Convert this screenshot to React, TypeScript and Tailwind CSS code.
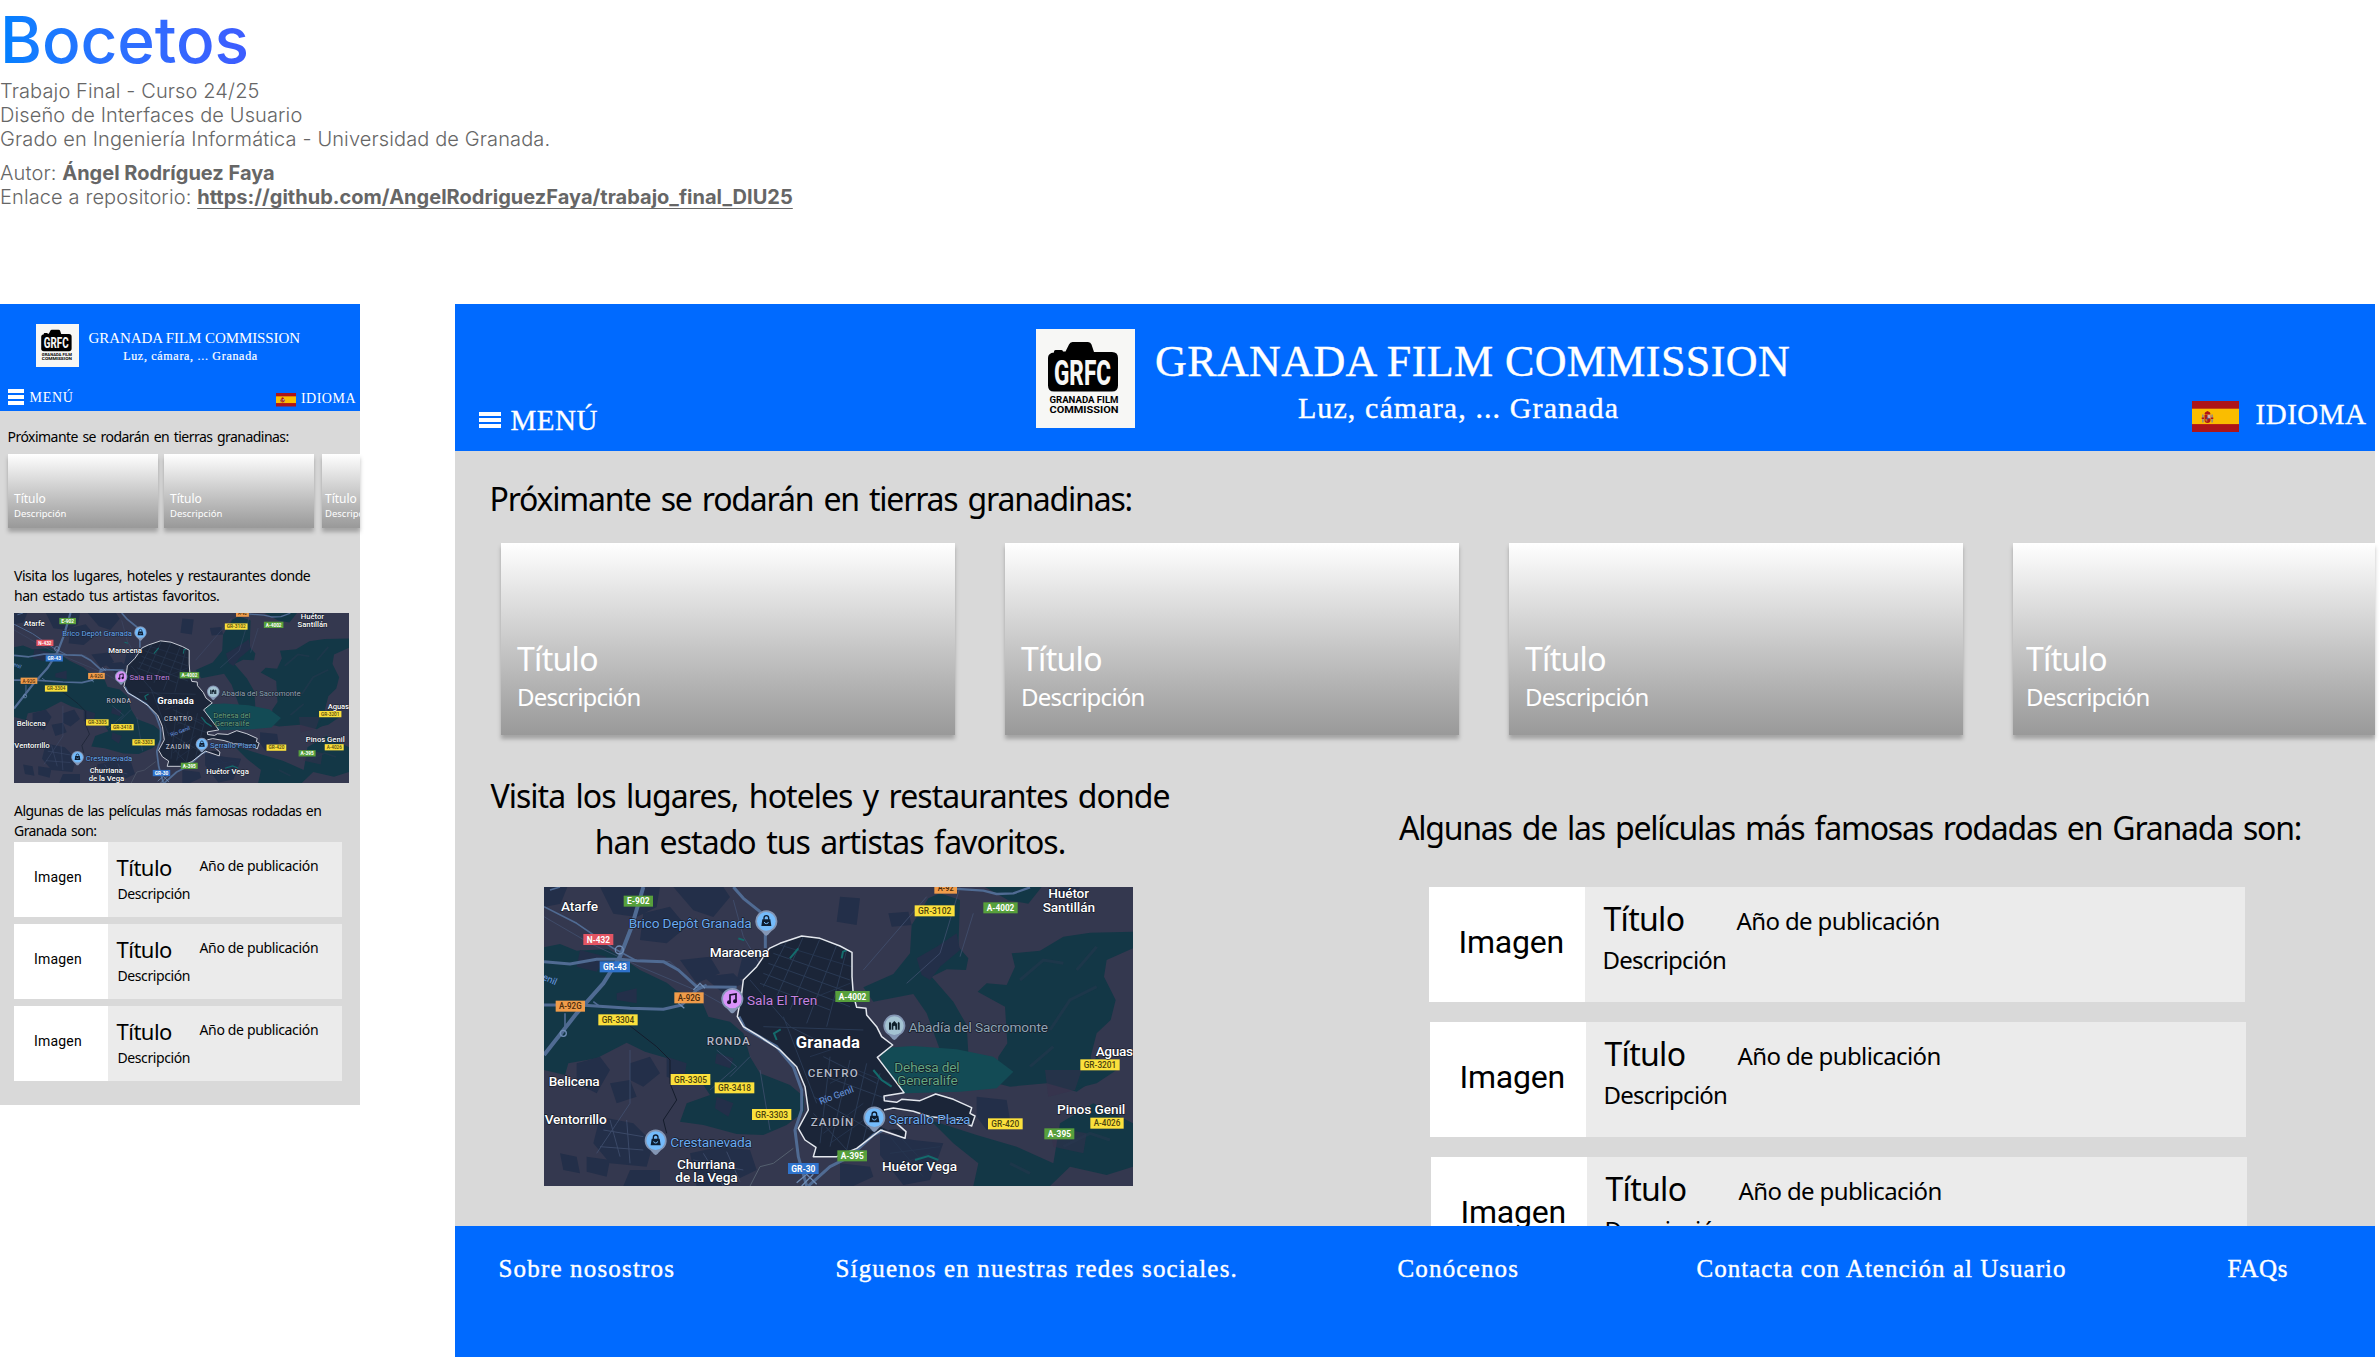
import type { ReactNode } from "react";

const serif = "font-['Liberation_Serif',serif] text-white whitespace-nowrap";
const sans = "font-['Noto_Sans',sans-serif]";

/* ---------- Logo ---------- */

function Logo({ className }: { className: string }) {
  return (
    <svg viewBox="0 0 99 99" className={className} role="img" aria-label="Granada Film Commission">
      <rect width="99" height="99" fill="#f7f7f5" />
      <path
        d="M18 23.5 V22.5 q0-1.5 1.5-1.5 h6 q1.5 0 1.5 1.5 h2.5 L33 15.500 q1-2.500 3.500-2.500 H52 q2.700 0 3.500 2.500 L58 23 H76 q6 0 6 6 V56.500 q0 6-6 6 H18 q-6 0-6-6 V29 q0-5 6-5.500 Z"
        fill="#000"
      />
      <g fontFamily="Roboto, sans-serif">
        <text x="18" y="55.500" fontSize="35" fontWeight="800" fill="#f7f7f5" textLength="57" lengthAdjust="spacingAndGlyphs">
          GRFC
        </text>
        <text x="13.500" y="73.500" fontSize="9.800" fontWeight="700" textLength="69" lengthAdjust="spacingAndGlyphs">
          GRANADA FILM
        </text>
        <text x="13.500" y="83.500" fontSize="9.800" fontWeight="700" textLength="69" lengthAdjust="spacingAndGlyphs">
          COMMISSION
        </text>
      </g>
    </svg>
  );
}

/* ---------- Spanish flag ---------- */

function Flag({ className }: { className: string }) {
  return (
    <svg viewBox="0 0 47 31" preserveAspectRatio="none" className={className} role="img" aria-label="España">
      <rect width="47" height="31" fill="#ad1519" />
      <rect y="7.700" width="47" height="15.400" fill="#fabd00" />
      <g>
        <rect x="10" y="13.500" width="1.700" height="8" fill="#9a8f78" />
        <rect x="19.300" y="13.500" width="1.700" height="8" fill="#9a8f78" />
        <path d="M9.700 16.500h2.300v1.500h-2.300zM19 16.500h2.300v1.500h-2.300z" fill="#ad1519" />
        <path d="M12.500 12.500 q0-1.500 3-2.500 q3 1 3 2.500 l-.600 1 h-4.800z" fill="#ad1519" />
        <path d="M12.500 13.800h6v5.200q0 3-3 3t-3-3z" fill="#ad1519" />
        <path d="M15.500 13.800h3v3.500h-3z" fill="#c9b3b6" />
        <path d="M13.300 18h2v2.800q-2-.300-2-1.800z" fill="#c8742a" />
        <circle cx="15.500" cy="17.500" r="1" fill="#3c5a8c" />
      </g>
    </svg>
  );
}

function Burger({ className = "" }: { className?: string }) {
  return (
    <div className={`flex h-4 flex-col justify-between ${className}`}>
      <div className="h-1 bg-white" />
      <div className="h-1 bg-white" />
      <div className="h-1 bg-white" />
    </div>
  );
}

/* ---------- Map ---------- */

type Shield = [string, number, number, number, "y" | "g" | "o" | "b" | "r"];

const shields: Shield[] = [
  ["E-902", 281, 77, 88, "g"],
  ["N-432", 160, 192, 90, "r"],
  ["GR-43", 209, 274, 91, "b"],
  ["A-92G", 77, 392, 88, "o"],
  ["A-92G", 433, 367, 88, "o"],
  ["GR-3304", 205, 433, 118, "y"],
  ["GR-3305", 422, 612, 119, "y"],
  ["GR-3418", 554, 637, 119, "y"],
  ["GR-3303", 666, 717, 118, "y"],
  ["GR-30", 774, 879, 92, "b"],
  ["A-92", 1213, 38, 68, "o"],
  ["GR-3102", 1154, 106, 120, "y"],
  ["A-4002", 1360, 97, 103, "g"],
  ["A-4002", 916, 363, 103, "g"],
  ["GR-3201", 1651, 568, 118, "y"],
  ["GR-420", 1374, 745, 104, "y"],
  ["A-4026", 1681, 743, 100, "y"],
  ["A-395", 1543, 775, 90, "g"],
  ["A-395", 922, 841, 89, "g"],
];

const shieldFill = { y: "#fbe03c", g: "#57a03c", o: "#f09c4a", b: "#2f73cc", r: "#e25563" };
const shieldText = { y: "#4c430f", g: "#fff", o: "#4a2a0c", b: "#fff", r: "#fff" };

type Label = [string, number, number, number, number, number, string];

const labels: Label[] = [
  ["Atarfe", 93, 122, 41, 111, 500, "#fff"],
  ["Maracena", 539, 262, 41, 178, 500, "#fff"],
  ["Belicena", 56, 648, 41, 153, 500, "#fff"],
  ["Ventorrillo", 44, 763, 41, 186, 500, "#fff"],
  ["Churriana", 441, 896, 41, 174, 500, "#fff"],
  ["de la Vega", 436, 936, 41, 187, 500, "#fff"],
  ["Huétor", 1555, 85, 41, 122, 500, "#fff"],
  ["Santillán", 1538, 125, 41, 157, 500, "#fff"],
  ["Aguas", 1697, 558, 41, 112, 500, "#fff"],
  ["Pinos Genil", 1581, 732, 41, 205, 500, "#fff"],
  ["Huétor Vega", 1056, 902, 41, 225, 500, "#fff"],
  ["Granada", 797, 533, 50, 193, 700, "#fff"],
  ["RONDA", 530, 525, 35, 129, 500, "#b4bac8"],
  ["CENTRO", 833, 622, 35, 150, 500, "#b4bac8"],
  ["ZAIDÍN", 842, 769, 35, 128, 500, "#b4bac8"],
  ["Brico Depôt Granada", 296, 173, 41, 369, 400, "#6aaaf0"],
  ["Crestanevada", 421, 831, 41, 245, 400, "#6aaaf0"],
  ["Serrallo Plaza", 1076, 762, 41, 245, 400, "#6aaaf0"],
  ["Sala El Tren", 651, 406, 41, 211, 400, "#c583e0"],
  ["Abadía del Sacromonte", 1136, 487, 41, 418, 400, "#8fa5b5"],
  ["Dehesa del", 1093, 606, 41, 196, 400, "#63a883"],
  ["Generalife", 1101, 646, 41, 182, 400, "#63a883"],
];

const bag = (
  <>
    <path d="M-12 -6h24l3 20h-30z" fill="#0d1c30" />
    <path d="M-7 -5v-5a7 7 0 0 1 14 0v5" fill="none" stroke="#0d1c30" strokeWidth="4" />
    <path d="M-6 2a6 5 0 0 0 12 0" fill="none" stroke="#74bbfb" strokeWidth="3" />
  </>
);

function Pin({ x, y, fill, children }: { x: number; y: number; fill: string; children: ReactNode }) {
  return (
    <g transform={`translate(${x} ${y})`}>
      <path d="M0 43 C-6 43 -10 32 -20 26 A33 33 0 1 1 20 26 C10 32 6 43 0 43Z" fill="#8496b4" />
      <circle r="28" fill={fill} />
      {children}
    </g>
  );
}

function GranadaMap({ className }: { className: string }) {
  return (
    <svg viewBox="42 51 1767 897" preserveAspectRatio="none" className={className} role="img" aria-label="Mapa de Granada">
      <rect x="42" y="51" width="1767" height="897" fill="#34384f" />

      {/* parkland */}
      <g fill="#133746">
        <path d="M42 232L90 222L140 242L235 237L275 262L330 300L410 338L440 362L510 380L535 440L600 455L640 490L660 560L690 610L780 645L822 680L822 725L770 765L700 795L620 792L520 765L450 755L470 700L540 675L520 645L470 620L430 570L345 545L290 518L200 565L115 580L105 615L42 600Z" />
        <path d="M1000 352L1090 312L1140 250L1145 165L1195 85L1230 70L1290 90L1285 230L1315 265L1308 300L1250 298L1205 320L1270 395L1310 465L1315 550L1230 540L1190 430L1150 372L1030 395Z" />
        <path d="M1445 250L1530 242L1600 200L1680 188L1809 185L1809 235L1730 270L1722 320L1757 390L1742 450L1700 490L1682 560L1700 625L1640 665L1550 640L1440 650L1400 640L1405 560L1432 520L1425 410L1343 365L1370 340L1430 345L1455 290Z" />
        <path d="M1200 750L1340 795L1460 830L1570 880L1590 760L1690 700L1809 760L1809 890L1730 915L1620 890L1560 948L1330 948L1345 880L1270 820Z" />
        <path d="M1365 51h170l-40 50l-60 -10z" />
        <path d="M1640 655L1700 560L1760 600L1700 640Z" />
      </g>
      <path d="M1045 535L1150 528L1280 538L1390 560L1450 605L1400 655L1290 665L1180 668L1122 670L1060 600Z" fill="#134b55" />
      <g fill="#382f4c">
        <path d="M1545 600h110l-20 60l-80 20zM1560 770l110 20l-10 60l-90 -20z" opacity=".5" />
      </g>

      {/* urban patches */}
      <g fill="#232f49">
        <path d="M42 51h70l-20 50l-50 10zM210 51h180l-10 60l-60 30l-70 -10zM430 51h150l20 30l-50 60l-60 -20zM340 130l80 -20l50 60l-60 50l-80 -10z" />
        <path d="M260 370l60 -15v45l-60 -10zM150 240l80 20l-30 45l-60 -15zM450 270l90 -10l30 50l-70 30zM520 320l90 -10l30 30l-60 30z" />
        <path d="M140 580l70 -20l30 40l-40 70l-60 -30zM240 640l60 -10l20 50l-60 20zM300 580l60 -20l30 50l-50 40l-40 -20z" />
        <path d="M210 740l100 20l60 60l-20 70l-110 -10l-50 -60zM90 850l50 10l10 50l-50 -10zM170 860l70 10l-10 50l-60 -15zM300 900h90v48h-110z" />
        <path d="M410 560l60 20l-10 60l-50 -20zM560 550l50 15l-10 30l-45 -15zM560 680l50 20l-15 40l-40 -25z" />
        <path d="M480 850l90 -20l90 10l20 60l-100 48h-80zM640 250l50 10l-20 60l-50 10z" />
        <path d="M930 80l60 5l-10 80l-60 -10zM1075 130l60 -5l10 40l-60 5zM1160 265l60 -35l60 -40l10 50l-60 50l-30 40l-25 -15z" />
        <path d="M1050 790l100 20l90 10l-40 110l-80 15l-70 -90zM1340 680l90 10l10 60l-70 30l-30 -40z" />
        <path d="M1590 51h60l-10 30h-50zM930 880l90 10l10 30l-60 28h-40z" />
      </g>
      <g fill="none" stroke="#2a3850" strokeWidth="9" opacity=".45">
        <path d="M1470 330l70 -60l60 10M1560 480l60 -90l80 -40M1500 590l70 -60M1600 830l80 -40l60 20M1640 300l60 -70M1440 880l60 30" />
      </g>

      {/* minor roads */}
      <g fill="none" stroke="#435272" strokeWidth="3" opacity=".75">
        <path d="M42 140L180 220L330 290L520 370L610 420M330 270L420 275L500 350M610 90L640 200L700 300L760 440L800 490M640 470L740 480L900 500M300 540V700L260 760L200 850M560 540L620 590L540 660M660 560L600 620M690 600L720 780M1190 80L1000 300M1290 51L1230 250L1130 340M1330 130L1290 260" />
        <path d="M220 780l120 20M240 750l30 110M290 750l10 130M210 830l130 10M490 870l150 30M520 850l60 98M590 845l40 90" />
      </g>
      <path d="M290 460L380 530L420 570V640L440 690L400 750L410 790" fill="none" stroke="#141c2c" strokeWidth="3" />
      <path d="M790 835L730 880L690 890L660 948" fill="none" stroke="#55606f" strokeWidth="3" />

      {/* municipality */}
      <path
        d="M718 235L750 220L815 198L870 205L930 228L966 247L966 320L970 375L980 412L1008 415L1010 435L1040 470L1055 500L1088 525L1042 562L1090 625L1122 668L1062 678L1063 692L1100 697L1115 688L1170 692L1217 672L1270 688L1325 713L1320 730L1335 738L1325 768L1312 762L1200 740L1150 724L1062 716L1052 770L1125 805L1128 785L1100 778L1050 782L980 835L920 860L850 860L858 832L825 810L805 775L835 720L825 650L800 590L750 540L690 500L640 470L622 440L635 370L640 330L680 290Z"
        fill="#1b2538"
      />
      <g fill="none" stroke="#2a3a54" strokeWidth="3">
        <path d="M730 250L960 330M715 280L965 370M700 310L960 410M690 340L900 420M770 215L700 350M820 200L740 380M870 206L780 420M920 225L830 460M950 240L890 470M660 330L780 470L880 520M760 440L860 700M700 470L1000 480M880 560L1040 640M860 610L1080 690M850 680L1040 790M850 730L960 850M900 560L870 820M960 570L900 830M1010 580L950 840M1050 610L1000 810" />
      </g>
      <g fill="none" stroke="#273650" strokeWidth="2.500">
        <path d="M750 225L965 290M860 380L960 340M900 640L980 600L1080 640M880 790L1000 700M900 820L1030 730M840 560L960 520M1080 800L1180 920M1110 800L1210 910M1080 850L1230 830M1090 890L1200 850" />
      </g>
      <path d="M780 265l25 -30M740 510l-8 -20l20 -12M935 265l4 -20l10 -4M1030 600l25 30l30 20M1155 870l40 -12l30 12M625 205l18 6" fill="none" stroke="#146b6c" strokeWidth="6" />

      {/* highways */}
      <g fill="none" stroke="#506b93" strokeWidth="9" strokeLinejoin="round">
        <path d="M340 51L305 170L270 260L220 340L140 430L42 555" strokeWidth="12" />
        <path d="M42 275L120 282L200 268L270 268L320 272L400 275L445 300L500 350L620 352" />
        <path d="M42 405L150 405L300 415L400 418L455 405L500 360L530 345" />
        <path d="M610 51L640 85L690 125L706 190V235" />
        <path d="M42 110L140 160L250 235L320 272" strokeWidth="5" />
        <path d="M627 440L645 475L740 530L790 590L815 660L815 720L795 780L805 860L830 948" />
        <path d="M835 948L900 890L960 860L1030 795L1060 780" />
        <path d="M1270 56L1360 62L1400 72L1450 70L1500 52" strokeWidth="7" />
        <path d="M105 430V480L85 505M190 395l20 15M60 60l30 -9" strokeWidth="5" />
      </g>
      <g fill="none" stroke="#6f8db5" strokeWidth="4">
        <circle cx="268" cy="240" r="12" />
        <circle cx="100" cy="490" r="9" />
        <path d="M490 360l20 -20l15 15M445 400l18 15M800 938l30 -25l30 30M815 948l35 -35" />
      </g>
      <path
        d="M718 235L750 220L815 198L870 205L930 228L966 247L966 320L970 375L980 412L1008 415L1010 435L1040 470L1055 500L1088 525L1042 562L1090 625L1122 668L1062 678L1063 692L1100 697L1115 688L1170 692L1217 672L1270 688L1325 713L1320 730L1335 738L1325 768L1312 762M1300 750L1200 740L1150 724L1090 714L1062 720M1100 760L1128 785L1125 805L1052 780L980 835L920 860L850 860L858 832L825 810L805 775L835 720L825 650L800 590L750 540L690 500L640 470L622 440L635 370L640 330L680 290L718 235"
        fill="none"
        stroke="#e4e8ee"
        strokeWidth="4.500"
        strokeLinejoin="round"
      />

      <Pin x={709} y={154} fill="#74bbfb">{bag}</Pin>
      <Pin x={377} y={812} fill="#74bbfb">{bag}</Pin>
      <Pin x={1033} y={743} fill="#74bbfb">{bag}</Pin>
      <Pin x={607} y={387} fill="#d993fa">
        <path d="M-7 10V-12L11 -15V7" fill="none" stroke="#1a1130" strokeWidth="5" />
        <circle cx="-10" cy="10" r="6" fill="#1a1130" />
        <circle cx="8" cy="7" r="6" fill="#1a1130" />
      </Pin>
      <Pin x={1093} y={467} fill="#a4c3d2">
        <path d="M-16 12V-8l3 -4l3 4V12zM10 12V-8l3 -4l3 4V12zM-8 12V-6L0 -14L8 -6V12H3V3a3 3 0 0 0-6 0V12z" fill="#10202c" />
      </Pin>

      <g fontFamily="Roboto, sans-serif">
        {shields.map(([t, x, y, w, c], i) => (
          <g key={i}>
            <rect x={x} y={y} width={w} height="33" fill={shieldFill[c]} />
            <text
              x={x + 10}
              y={y + 26}
              fontSize="27"
              fontWeight={c === "y" || c === "o" ? 500 : 700}
              fill={shieldText[c]}
              textLength={w - 20}
              lengthAdjust="spacingAndGlyphs"
            >
              {t}
            </text>
          </g>
        ))}
        {labels.map(([t, x, y, size, w, weight, fill]) => (
          <text
            key={t}
            x={x}
            y={y}
            fontSize={size}
            fontWeight={weight}
            fill={fill}
            textLength={w}
            stroke="#141a28"
            strokeWidth="4"
            strokeLinejoin="round"
            paintOrder="stroke"
          >
            {t}
          </text>
        ))}
        <text transform="translate(872 704) rotate(-21)" fontSize="28" fill="#6c9be0" textLength="108">
          Río Genil
        </text>
        <text transform="translate(36 328) rotate(24)" fontSize="28" fill="#6c9be0">
          enil
        </text>
      </g>
    </svg>
  );
}

/* ---------- Mobile sketch ---------- */

const cardBase = "shrink-0 overflow-hidden bg-linear-to-b from-white to-[#999] shadow-[0_4px_4px_rgba(0,0,0,0.25)] text-white";

function MobileCard({ className }: { className: string }) {
  return (
    <div className={`${cardBase} h-[74px] pt-[37px] ${className}`}>
      <p className="text-[12px] leading-4">Título</p>
      <p className="mt-px w-[60px] text-[9.5px] leading-3">Descripción</p>
    </div>
  );
}

function MobileFilm() {
  return (
    <div className="flex h-[75px] w-[328px] bg-[#ebebeb]">
      <div className="w-[94px] bg-white pt-[25px] pl-[20px] font-['Roboto',sans-serif] text-[14px] leading-5 tracking-[0.2px]">
        Imagen
      </div>
      <div className="pt-[13px] pl-[8.500px]">
        <div className="flex h-6">
          <p className="w-[83px] text-[22px] leading-6 tracking-[-0.500px]">Título</p>
          <p className="pt-px text-[14px] leading-5 tracking-[-0.350px]">Año de publicación</p>
        </div>
        <p className="mt-[5px] pl-px text-[14px] leading-5 tracking-[-0.400px]">Descripción</p>
      </div>
    </div>
  );
}

function MobileFrame() {
  return (
    <section className={`h-[801px] w-[360px] shrink-0 bg-[#d9d9d9] text-black ${sans}`}>
      <header className={`h-[107px] bg-[#006aff] pt-5 ${serif}`}>
        <div className="flex h-[65px] pl-9">
          <Logo className="size-[43px]" />
          <div className="ml-[9.500px] w-[212px] pt-[5px]">
            <h2 className="text-[15px] leading-[18px] tracking-[-0.080px]">GRANADA FILM COMMISSION</h2>
            <p className="mt-px pr-[8px] text-center text-[12px] leading-4 tracking-[0.700px] [-webkit-text-stroke:0.2px_white]">
              Luz, cámara, ... Granada
            </p>
          </div>
        </div>
        <div className="flex items-start pr-1 pl-2 text-[14px] leading-[18px]">
          <Burger className="w-4" />
          <span className="ml-[5.500px] tracking-[0.700px]">MENÚ</span>
          <Flag className="mt-[4px] mr-[4.500px] ml-auto h-[13.500px] w-5" />
          <span className="mt-px tracking-[0.500px]">IDIOMA</span>
        </div>
      </header>

      <h3 className="pt-4 pl-[7.500px] text-[14px] leading-5 tracking-[-0.530px] [word-spacing:1.4px]">
        Próximante se rodarán en tierras granadinas:
      </h3>
      <div className="mt-[7px] flex pl-2">
        <MobileCard className="w-[150px] pl-[6px]" />
        <MobileCard className="ml-[6px] w-[150px] pl-[6px]" />
        <MobileCard className="ml-[8px] w-[38px] pl-[3px]" />
      </div>

      <div className="pt-[38px] pl-[14px]">
        <h3 className="text-[14px] leading-5 tracking-[-0.450px] [word-spacing:1.4px]">
          Visita los lugares, hoteles y restaurantes donde
          <br />
          han estado tus artistas favoritos.
        </h3>
        <GranadaMap className="mt-[7px] h-[170px] w-[335px]" />
        <h3 className="mt-[18px] text-[14px] leading-5 tracking-[-0.560px] [word-spacing:1.4px]">
          Algunas de las películas más famosas rodadas en
          <br />
          Granada son:
        </h3>
        <div className="mt-px flex flex-col gap-[7px]">
          <MobileFilm />
          <MobileFilm />
          <MobileFilm />
        </div>
      </div>
    </section>
  );
}

/* ---------- Desktop sketch ---------- */

function DesktopCard({ className }: { className: string }) {
  return (
    <div className={`${cardBase} h-[192px] pt-[96px] ${className}`}>
      <p className="text-[32px] leading-10 tracking-[-0.700px]">Título</p>
      <p className="mt-[3px] text-[24px] leading-[30px] tracking-[-0.760px]">Descripción</p>
    </div>
  );
}

function DesktopFilm({ className }: { className: string }) {
  return (
    <div className={`flex h-[115px] w-[816px] shrink-0 bg-[#ebebeb] ${className}`}>
      <div className="w-[156px] bg-white pt-[35px] pl-[29.500px] font-['Roboto',sans-serif] text-[32px] leading-10 tracking-[-0.200px]">
        Imagen
      </div>
      <div className="pt-3 pl-[17.500px]">
        <div className="flex h-10 pl-px">
          <p className="w-[133px] text-[32px] leading-10 tracking-[-0.700px]">Título</p>
          <p className="pt-[7px] text-[24px] leading-[30px] tracking-[-0.620px]">Año de publicación</p>
        </div>
        <p className="mt-[6px] text-[24px] leading-[30px] tracking-[-0.760px]">Descripción</p>
      </div>
    </div>
  );
}

function DesktopFrame() {
  return (
    <section className={`flex h-[1053px] w-[1920px] shrink-0 flex-col bg-[#d9d9d9] text-black ${sans}`}>
      <header className={`flex h-[147px] shrink-0 items-start bg-[#006aff] ${serif}`}>
        <div className="flex w-[581px] pl-6">
          <Burger className="mt-[108px] w-[22px]" />
          <span className="mt-[99px] ml-[9.500px] text-[29px] leading-[34px] tracking-[0.500px] [-webkit-text-stroke:0.3px_white]">
            MENÚ
          </span>
        </div>
        <Logo className="mt-[25px] size-[99px]" />
        <div className="mt-[33px] ml-[20px] w-[637px]">
          <h2 className="text-[44px] leading-[50px] tracking-[0.400px] [-webkit-text-stroke:0.4px_white]">
            GRANADA FILM COMMISSION
          </h2>
          <p className="mt-[3px] pr-[30px] text-center text-[30px] leading-9 tracking-[1.100px] [-webkit-text-stroke:0.4px_white]">
            Luz, cámara, ... Granada
          </p>
        </div>
        <div className="ml-auto flex pr-[8.500px]">
          <Flag className="mt-[97px] mr-[17px] h-[31px] w-[47px]" />
          <span className="mt-[93px] text-[29px] leading-[34px] tracking-[0.500px] [-webkit-text-stroke:0.3px_white]">
            IDIOMA
          </span>
        </div>
      </header>

      <main className="flex min-h-0 flex-1 flex-col">
        <h3 className="mt-[25px] pl-[34.500px] text-[32px] leading-[46px] tracking-[-1.200px] [word-spacing:3px]">
          Próximante se rodarán en tierras granadinas:
        </h3>
        <div className="mt-[21px] flex gap-[50px] pl-[46px]">
          <DesktopCard className="w-[454px] pl-4" />
          <DesktopCard className="w-[454px] pl-4" />
          <DesktopCard className="w-[454px] pl-4" />
          <DesktopCard className="w-[362px] pl-[13px]" />
        </div>
        <div className="flex min-h-0 flex-1 overflow-hidden">
          <div className="w-[944px] shrink-0">
            <h3 className="mt-[38px] w-[750px] text-center text-[32px] leading-[46px] tracking-[-0.960px] [word-spacing:3px]">
              Visita los lugares, hoteles y restaurantes donde
              <br />
              han estado tus artistas favoritos.
            </h3>
            <GranadaMap className="mt-[22px] ml-[89px] h-[299px] w-[589px]" />
          </div>
          <div className="shrink-0">
            <h3 className="mt-[70px] text-[32px] leading-[46px] tracking-[-1.230px] [word-spacing:3px]">
              Algunas de las películas más famosas rodadas en Granada son:
            </h3>
            <div className="mt-9 flex flex-col gap-5">
              <DesktopFilm className="ml-[30px]" />
              <DesktopFilm className="ml-[31px]" />
              <DesktopFilm className="ml-[32px]" />
            </div>
          </div>
        </div>
      </main>

      <footer
        className={`grid h-[131px] shrink-0 grid-cols-[337px_562px_299px_531px_auto] bg-[#006aff] pt-[28px] pl-[43.500px] text-[25px] leading-[30px] tracking-[1.170px] [-webkit-text-stroke:0.4px_white] ${serif}`}
      >
        <span>Sobre nosostros</span>
        <span>Síguenos en nuestras redes sociales.</span>
        <span>Conócenos</span>
        <span className="tracking-[1.020px]">Contacta con Atención al Usuario</span>
        <span className="tracking-[0.700px]">FAQs</span>
      </footer>
    </section>
  );
}

export default function App() {
  return (
    <div className="h-[1357px] w-[2379px] overflow-hidden bg-white font-['Inter',sans-serif]">
      <div className="h-[304px] text-[20px] leading-6 font-light tracking-[0.120px] text-[#666]">
        <h1 className="w-fit bg-linear-to-r from-[#0080ff] to-[#3d5cff] bg-clip-text text-[64px] leading-[79px] font-medium tracking-[-0.100px] text-transparent">
          Bocetos
        </h1>
        <p>Trabajo Final - Curso 24/25</p>
        <p>Diseño de Interfaces de Usuario</p>
        <p>Grado en Ingeniería Informática - Universidad de Granada.</p>
        <p className="mt-[10px]">
          Autor: <strong className="font-bold tracking-normal">Ángel Rodríguez Faya</strong>
        </p>
        <p>
          Enlace a repositorio:{" "}
          <a className="font-bold tracking-[0.020px] underline decoration-1 underline-offset-4">
            https://github.com/AngelRodriguezFaya/trabajo_final_DIU25
          </a>
        </p>
      </div>
      <div className="flex items-start gap-[95px]">
        <MobileFrame />
        <DesktopFrame />
      </div>
    </div>
  );
}
